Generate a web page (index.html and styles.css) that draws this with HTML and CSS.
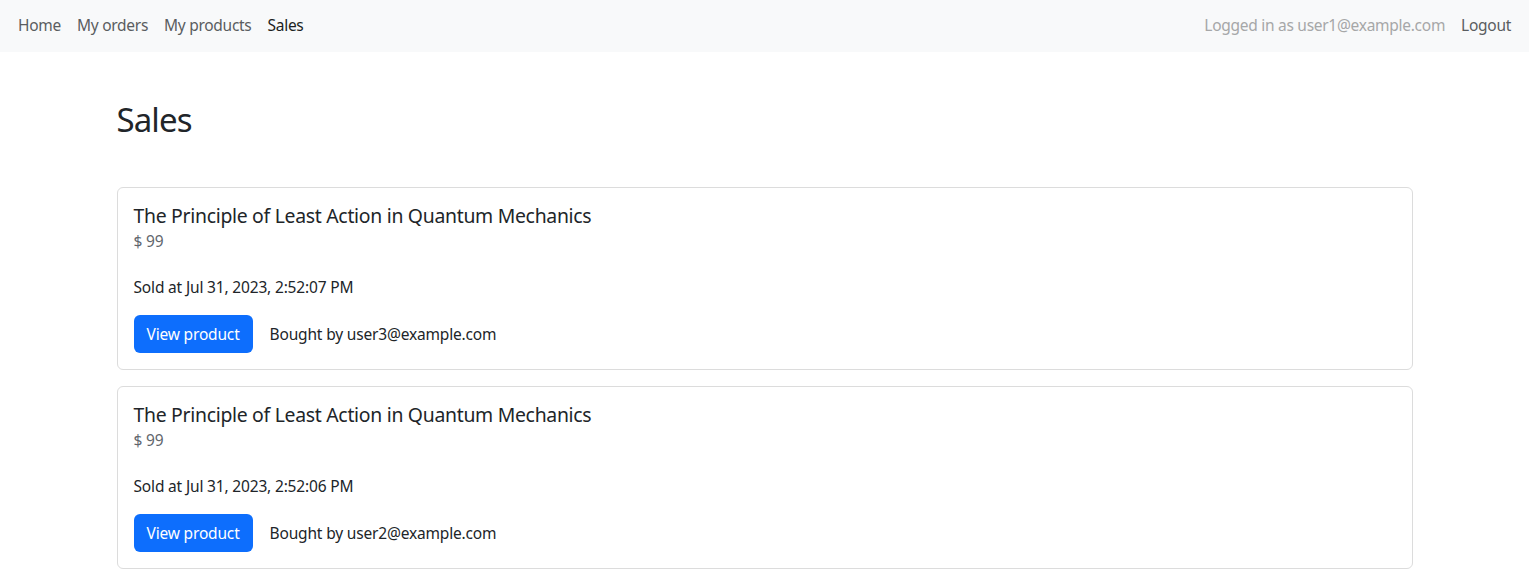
FILE: index.html
```html
<!DOCTYPE html>
<html lang="en">
<head>
<meta charset="utf-8">
<title>Sales</title>
<link rel="stylesheet" href="styles.css">
</head>
<body>
<nav class="navbar">
  <ul class="nav-links">
    <li><a class="nav-link" href="#">Home</a></li>
    <li><a class="nav-link" href="#">My orders</a></li>
    <li><a class="nav-link" href="#">My products</a></li>
    <li><a class="nav-link active" href="#">Sales</a></li>
  </ul>
  <div class="nav-right">
    <span class="navbar-text">Logged in as user1@example.com</span>
    <a class="nav-link" href="#">Logout</a>
  </div>
</nav>
<main class="container">
  <h1 class="page-title">Sales</h1>
  <div class="card">
    <h5 class="card-title">The Principle of Least Action in Quantum Mechanics</h5>
    <div class="card-price">$ 99</div>
    <p class="card-text">Sold at Jul 31, 2023, 2:52:07 PM</p>
    <div class="card-actions">
      <a class="btn" href="#">View product</a>
      <span class="buyer">Bought by user3@example.com</span>
    </div>
  </div>
  <div class="card">
    <h5 class="card-title">The Principle of Least Action in Quantum Mechanics</h5>
    <div class="card-price">$ 99</div>
    <p class="card-text">Sold at Jul 31, 2023, 2:52:06 PM</p>
    <div class="card-actions">
      <a class="btn" href="#">View product</a>
      <span class="buyer">Bought by user2@example.com</span>
    </div>
  </div>
</main>
</body>
</html>
```
FILE: styles.css
```css
* { box-sizing: border-box; }
html, body { margin: 0; padding: 0; }
body {
  font-family: "Noto Sans", "Open Sans", sans-serif;
  font-size: 15.5px;
  letter-spacing: -0.17px;
  line-height: 24px;
  color: #212529;
  background: #fff;
}
a { text-decoration: none; }

.navbar {
  display: flex;
  align-items: center;
  justify-content: space-between;
  height: 52px;
  padding: 0 10px 2px;
  background: #f8f9fa;
  letter-spacing: -0.28px;
}
.nav-links {
  display: flex;
  list-style: none;
  margin: 0;
  padding: 0;
}
.nav-link {
  display: block;
  padding: 0 8px;
  color: #5a5d60;
}
.nav-link.active { color: #1c1f22; }
.nav-right { display: flex; align-items: center; }
.navbar-text { color: #a6a7a8; padding-right: 8px; }

.container {
  max-width: 1320px;
  margin: 0 auto;
  padding: 0 12px;
}
.page-title {
  font-size: 33px;
  letter-spacing: -0.9px;
  font-weight: 400;
  line-height: 40px;
  margin: 48px 0 47px;
}
.card {
  border: 1px solid #dcdcdc;
  border-radius: 6px;
  padding: 16px;
  margin-bottom: 16px;
}
.card-title {
  font-size: 19.4px;
  letter-spacing: -0.29px;
  font-weight: 400;
  line-height: 24px;
  margin: 0 0 1px;
}
.card-price { color: #5f666d; }
.card-text { margin: 22px 0 16px; }
.card-actions { display: flex; align-items: center; gap: 17px; }
.btn {
  display: inline-block;
  background: #0d6efd;
  color: #fff;
  border-radius: 6px;
  padding: 7px 13px;
  line-height: 24px;
}
```
